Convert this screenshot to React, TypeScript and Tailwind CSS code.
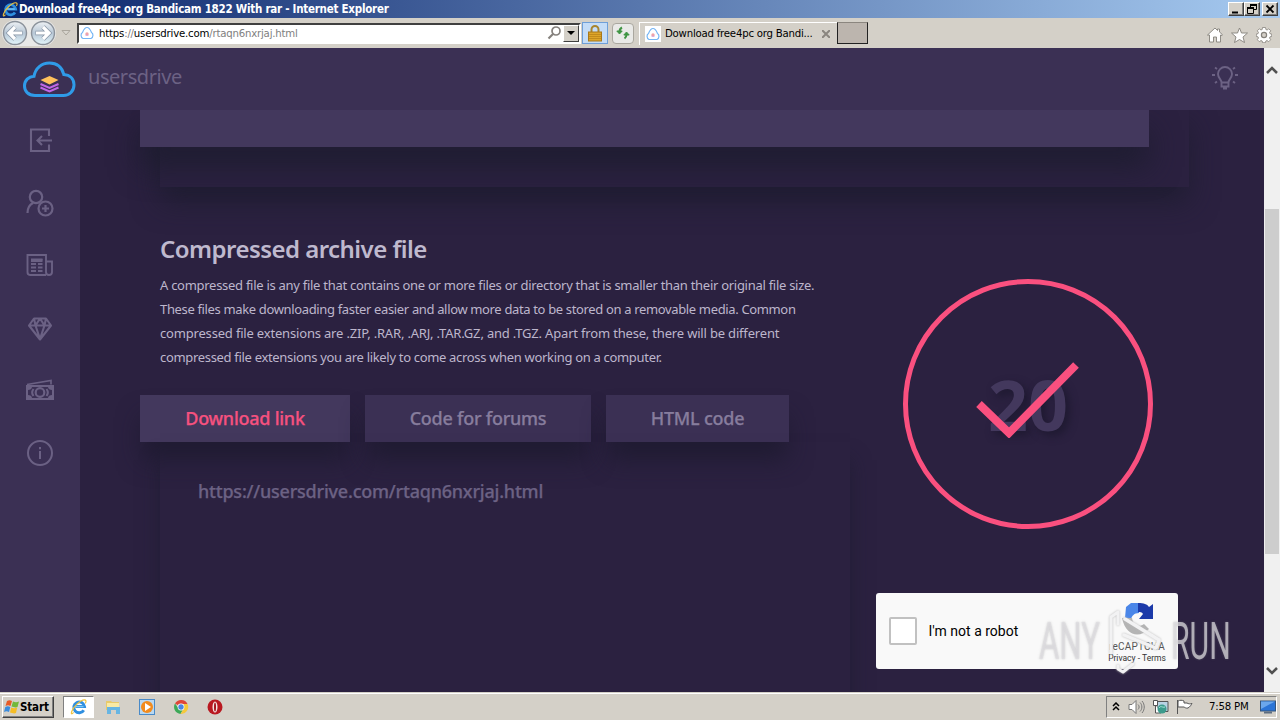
import type { ReactNode } from "react";

const ui = "font-['DejaVu_Sans_Condensed','DejaVu_Sans',sans-serif] [font-stretch:condensed]";

function IeLogo({ className }: { className: string }) {
  return (
    <svg viewBox="0 0 20 20" className={className} fill="none">
      <path d="M15.300 13.500a6 6 0 1 1 .8-4H6.200" stroke="#2f8fe0" strokeWidth="3.200" />
      <path d="M5.500 9.500h9.500" stroke="#7cc8f7" strokeWidth="1.500" />
      <path d="M4 16C-.5 21 1 13 8 6.500 14 1 20 .5 17 6" stroke="#f0c33c" strokeWidth="1.300" />
    </svg>
  );
}

function CloudFavicon() {
  return (
    <svg viewBox="0 0 16 16" className="size-4 shrink-0" fill="none">
      <rect width="16" height="16" fill="#fff" />
      <path d="M4 13.500C1.500 12.500 1.500 8.500 3.500 7.500 4.500 5 6 2.500 8 2.500s3.500 2.500 4.500 5c2 1 2 5-.5 6z" stroke="#74b5f5" strokeWidth="1.200" />
      <circle cx="8" cy="9" r="1.700" fill="#f0a3a8" />
      <path d="M6.500 10.300h3" stroke="#c79be6" strokeWidth=".7" />
    </svg>
  );
}

function NavArrow({ back }: { back?: boolean }) {
  return (
    <svg viewBox="0 0 26 26" className="size-[26px]" fill="none">
      <defs>
        <linearGradient id={back ? "nb" : "nf"} x1="0" y1="0" x2="0" y2="1">
          <stop offset="0" stopColor="#eef1f4" />
          <stop offset=".5" stopColor="#b7c7d6" />
          <stop offset="1" stopColor="#e3f5fb" />
        </linearGradient>
      </defs>
      <circle cx="13" cy="13" r="11.500" fill={back ? "url(#nb)" : "url(#nf)"} stroke="#8b929b" strokeWidth="1.400" />
      <path
        d={back ? "M20.500 13H7.500M13 7 7 13l6 6" : "M5.500 13h13M13 7l6 6-6 6"}
        stroke="#8795a5"
        strokeWidth="4.600"
      />
      <path
        d={back ? "M20 13H8M13 7 7 13l6 6" : "M6 13h12M13 7l6 6-6 6"}
        stroke="#fff"
        strokeWidth="3.200"
      />
    </svg>
  );
}

function WinButton({ children }: { children: ReactNode }) {
  return (
    <div className="flex h-[14px] w-4 items-center justify-center border border-t-white border-l-white border-r-[#404040] border-b-[#404040] bg-[#d4d0c8] shadow-[inset_-1px_-1px_0_#808080]">
      <svg viewBox="0 0 12 12" className="size-3" fill="none" stroke="#000">
        {children}
      </svg>
    </div>
  );
}

function TitleBar() {
  return (
    <div className="flex h-[18px] items-center bg-[linear-gradient(90deg,#0a246a_0%,#a6caf0_100%)] pr-[2px] pl-0.5">
      <IeLogo className="size-[17px]" />
      <span className={`${ui} w-[372px] text-[11.5px] leading-[17px] font-bold tracking-[-0.25px] whitespace-nowrap text-white`}>
        Download free4pc org Bandicam 1822 With rar - Internet Explorer
      </span>
      <div className="ml-auto flex">
        <WinButton><path d="M2 9.500h6" strokeWidth="2" /></WinButton>
        <WinButton>
          <path d="M4.500 4V1.500h6v5H8" />
          <path d="M4 2h7M1 5h7" strokeWidth="2" />
          <path d="M1.500 5v5.500h6V5" />
        </WinButton>
        <div className="ml-0.5">
          <WinButton><path d="m2.500 2.500 7 7M9.500 2.500l-7 7" strokeWidth="1.800" /></WinButton>
        </div>
      </div>
    </div>
  );
}

function Toolbar() {
  return (
    <div className="flex h-[30px] items-center bg-[#d4d0c8]">
      <div className="ml-0.5 flex items-center gap-0.5 rounded-full bg-[#e9e9e8]">
        <NavArrow back />
        <NavArrow />
      </div>
      <svg viewBox="0 0 10 8" className="ml-[5px] h-2 w-2.5" fill="#d8d5ce" stroke="#aaa69d">
        <path d="M1 1.500h8L5 6z" />
      </svg>
      <div className="ml-1.5 flex h-[21px] w-[504px] items-center border-2 border-t-[#404040] border-l-[#404040] border-r-white border-b-white bg-white">
        <CloudFavicon />
        <span className={`${ui} mt-0.5 ml-1 text-[11.3px] tracking-[-0.2px] whitespace-nowrap text-[#808080]`}>
          <span className="text-black">https</span>://
          <span className="text-black">usersdrive.com</span>/rtaqn6nxrjaj.html
        </span>
        <svg viewBox="0 0 16 16" className="ml-auto size-4" fill="none" stroke="#85817d" strokeWidth="1.700">
          <circle cx="10" cy="6" r="4" />
          <path d="M7 9 2.500 13.500" strokeWidth="2.200" />
        </svg>
        <div className="ml-px flex h-[17px] w-4 items-center justify-center border border-t-white border-l-white border-r-[#404040] border-b-[#404040] bg-[#d4d0c8]">
          <svg viewBox="0 0 8 4" className="h-1 w-2"><path d="M0 0h8L4 4z" /></svg>
        </div>
      </div>
      <div className="ml-px flex h-[22px] w-[26px] items-center justify-center border border-[#6f9fd8] bg-[#c4dcf7]">
        <svg viewBox="0 0 14 17" className="h-[17px] w-3.5" fill="none">
          <path d="M3.500 8V4.500a3.500 3.500 0 0 1 7 0V8" stroke="#a8852e" strokeWidth="2" />
          <rect x=".5" y="7" width="13" height="9" fill="#dda529" stroke="#a8781a" />
          <path d="M1 9.500h12M1 11.500h12M1 13.500h12" stroke="#b57f17" strokeWidth=".7" />
        </svg>
      </div>
      <div className="ml-1 flex h-[21px] w-[22px] items-center justify-center rounded-sm border border-[#aaa79f] bg-[#e9e9e7]">
        <svg viewBox="0 0 14 14" className="size-3.5" fill="#3f9443" stroke="#3f9443" strokeWidth="2">
          <path d="M6 1.500C4 2.500 3.500 4 3.500 6M8.500 12.500c1.500-1 2-2.500 2-4" fill="none" />
          <path d="M.8 5h5.400L3.500 8zM7.800 9h5.400L10.500 6z" strokeWidth="1" />
        </svg>
      </div>
      <div className="ml-[5px] flex h-[23px] w-[198px] items-center border-t border-l border-white pl-[5px]">
        <CloudFavicon />
        <span className={`${ui} mt-0.5 ml-1 text-[11.3px] tracking-[-0.22px] whitespace-nowrap text-black`}>Download free4pc org Bandi...</span>
        <svg viewBox="0 0 8 8" className="mr-[7px] ml-auto size-2" stroke="#8b867f" strokeWidth="2"><path d="m0 0 8 8M8 0 0 8" /></svg>
      </div>
      <div className="h-[22px] w-[31px] border border-t-[#8b867f] border-l-[#222] border-r-[#222] border-b-[#222] bg-[#bcb5ae]" />
      <div className="mt-1 mr-2 ml-auto flex items-center gap-2 text-[#85817b]">
        <svg viewBox="0 0 16 16" className="size-4" fill="#fff" stroke="currentColor" strokeWidth=".9">
          <path d="M2.500 8v7h4v-5h3v5h4V8l1.500.5.300-1L12.500 5V2h-2v1.500L8 1 .5 8z" />
        </svg>
        <svg viewBox="0 0 17 16" className="h-4 w-[17px]" fill="#fff" stroke="currentColor" strokeWidth=".9">
          <path d="m8.500 1 2 5h6l-4.500 4 1.500 5.500-5-3-5 3L5 10 .5 6h6z" />
        </svg>
        <svg viewBox="0 0 16 16" className="size-4" fill="#fff" stroke="currentColor" strokeWidth=".8">
          <path d="M6.500.5h3l.4 2 1.200.5 1.700-1.200 2 2L13.500 5.500l.5 1.200 1.700.3v2.500l-1.700.3-.5 1.200 1.200 1.700-2 2-1.700-1.200-1.200.5-.3 1.700h-3l-.3-1.700-1.200-.5-1.700 1.200-2-2 1.200-1.700L2 9.800.3 9.500V7L2 6.700l.5-1.200-1.200-1.700 2-2L5 3l1.200-.5z" />
          <circle cx="8" cy="8" r="2.600" fill="#d4d0c8" strokeWidth="1.200" />
        </svg>
      </div>
    </div>
  );
}

function SiteHeader() {
  return (
    <header className="flex h-[62px] shrink-0 items-center bg-[#3b3054] pr-[26px] pl-[22px]">
      <svg viewBox="0 0 54 38" className="-mt-px h-[38px] w-[54px]" fill="none">
        <path
          d="M13 35.500C6 35.500 2.500 31 2.500 26c0-5.500 4-9.500 9.500-9.800C13.500 8 19.500 3 27.500 3c7.500 0 12.500 4.500 14.300 11.500 6.200.5 10.200 4.500 10.200 10.300 0 6.200-4.500 10.700-10.500 10.700z"
          stroke="#2f9be8"
          strokeWidth="3"
        />
        <path d="m18.500 20 9-4 9 4-9 4.500z" fill="#ffc15c" />
        <path d="m18.500 24 9 4 9-4M18.500 27.500l9 4 9-4" stroke="#c067e6" strokeWidth="2" />
      </svg>
      <span className="-mt-1 ml-3 font-['Noto_Sans',sans-serif] text-xl tracking-[-0.45px] whitespace-nowrap text-[#6c6284]">usersdrive</span>
      <svg viewBox="0 0 26 26" className="-mt-1 ml-auto size-[26px]" fill="none" stroke="#6c6284" strokeWidth="1.900">
        <path d="M9.500 18.500c0-3-3.500-4.500-3.500-8.500a7 7 0 0 1 14 0c0 4-3.500 5.500-3.500 8.500zM9.500 18.500v4h7v-4M11 24.500h4M0 11h3M23 11h3M3 3.500l2 1.500M23 3.500 21 5M3 19l2-1.500M23 19l-2-1.500" />
      </svg>
    </header>
  );
}

function Sidebar() {
  return (
    <nav className="flex w-20 shrink-0 flex-col items-center bg-[#3b3054] pt-4 text-[#6b6184]">
      <svg viewBox="0 0 28 28" className="size-7" fill="none" stroke="currentColor" strokeWidth="2.100">
        <path d="M23 10V3.500H5V25h18v-6.500M26 14.500H12M16 10l-4.500 4.500L16 19" />
      </svg>
      <svg viewBox="0 0 28 28" className="mt-[35px] size-7" fill="none" stroke="currentColor" strokeWidth="2.200">
        <circle cx="10" cy="8" r="6.200" />
        <path d="M1.500 24c0-5.500 2.500-8.500 5.500-10" />
        <circle cx="19.500" cy="19.500" r="7" />
        <path d="M19.500 16v7M16 19.500h7" />
      </svg>
      <svg viewBox="0 0 28 28" className="mt-[34px] size-7" fill="none" stroke="currentColor" strokeWidth="1.900">
        <path d="M20 24H4c-2 0-2.500-1-2.500-3V4H20v17c0 4 6 4 6 0V10.500h-6M5 8.500h11.500M5 13h5M12 13h4.500M5 16.500h5M12 16.500h4.500M5 20h5M12 20h4.500" />
        <path d="M5 9.500h11.500" strokeWidth="3" />
      </svg>
      <svg viewBox="0 0 28 28" className="mt-[36px] size-7" fill="none" stroke="currentColor" strokeWidth="2.100" strokeLinejoin="round">
        <path d="M8 3.500h12l5 7L14 24.500 3 10.500zM3 10.500h22M9.500 10.500 14 24l4.500-13.500M8 3.500l1.500 7 4.500-7 4.500 7 1.500-7" />
      </svg>
      <svg viewBox="0 0 28 22" className="mt-[36px] h-[22px] w-7" fill="none" stroke="currentColor" strokeWidth="1.700">
        <path d="M1 5.500 25 1.500v4" />
        <path fill="currentColor" stroke="none" fillRule="evenodd" d="M0 6h28v15H0zM6 8c0 2-2 3-4 3v5c2 0 4 1 4 3h16c0-2 2-3 4-3v-5c-2 0-4-1-4-3z" />
        <circle cx="14" cy="13.500" r="4.300" strokeWidth="2.200" />
        <path d="M7.500 10c-1.500 2-1.500 5 0 7M20.500 10c1.500 2 1.500 5 0 7" strokeWidth="2" />
      </svg>
      <svg viewBox="0 0 28 28" className="mt-[38px] size-7" fill="none" stroke="currentColor" strokeWidth="2">
        <circle cx="14" cy="14" r="12" />
        <path d="M14 12v8M14 8v2.200" strokeWidth="2" />
      </svg>
    </nav>
  );
}

function Recaptcha() {
  return (
    <div className="relative flex h-[76px] w-[302px] items-center rounded-[3px] bg-[#f9f9f9] pl-[13px]">
      <div className="size-7 rounded-[2px] border-2 border-[#c1c1c1] bg-white" />
      <span className="ml-[11.5px] font-[Roboto,sans-serif] text-sm whitespace-nowrap text-black">I'm not a robot</span>
      <div className="mt-1 mr-[11px] ml-auto flex w-[60px] flex-col items-center font-[Roboto,sans-serif] whitespace-nowrap text-[#555]">
        <svg viewBox="0 0 32 34" className="h-[34px] w-8">
          <path d="M5 5 10 1h8v10c-5 0-7 3-8 6L4 16z" fill="#4a86e8" />
          <path d="M17 1c6 0 9 1 11 4l4-3v15H18l4-5c-1-2-3-2-5-2z" fill="#1c3aa9" />
          <path d="M1 16h10c1 7 7 10 12 6l5 5c-9 9-23 8-27-11z" fill="#b4b4b4" />
        </svg>
        <span className="mt-1 text-[10px] leading-[13px] tracking-[0.2px]">reCAPTCHA</span>
        <span className="text-[8.5px] leading-[11px] text-[#333]">Privacy - Terms</span>
      </div>
      <div className="absolute top-[16px] left-[163px] flex w-[195px] items-center font-[Roboto,sans-serif] text-[52px] leading-[52px] font-normal whitespace-nowrap text-[#dedde1]/70 [text-shadow:0_0_3px_#88888866]">
        <span className="w-[67px]"><span className="inline-block origin-left scale-x-[0.6]">ANY</span></span>
        <svg viewBox="0 0 60 66" className="h-[66px] w-[60px] shrink-0 overflow-visible drop-shadow-[0_0_1px_#bbb]" fill="none" stroke="#f2f2f3" strokeLinecap="round" strokeLinejoin="round">
          <path d="M5 44V8l7-5v12" strokeWidth="3" />
          <path d="m19 10 34 21-3 8-32-13" strokeWidth="3.500" />
          <path d="M12 57v3l5 3 10-8" strokeWidth="3" />
        </svg>
        <span className="ml-[5px] w-[60px]"><span className="inline-block origin-left scale-x-[0.58]">RUN</span></span>
      </div>
    </div>
  );
}

const tabShadow = "shadow-[0_20px_25px_-2px_rgba(28,26,46,0.75)]";

function Main() {
  return (
    <main className="min-w-0 flex-1 overflow-hidden bg-[#2b2140] pl-20 font-['Noto_Sans',sans-serif]">
      <div className="h-[77px] w-[1029px] shadow-[0_15px_28px_rgba(28,28,46,0.75)]">
        <div className="-ml-5 h-[37px] w-[1009px] bg-[#43385d] shadow-[0_20px_30px_rgba(28,28,46,0.85)]" />
      </div>
      <div className="flex">
        <section className="w-[690px] shrink-0 pt-[46px]">
          <h1 className="h-8 text-2xl leading-8 font-semibold tracking-[-0.54px] whitespace-nowrap text-[#bfb9ce]">Compressed archive file</h1>
          <p className="mt-2 text-[13px] leading-6 whitespace-nowrap text-[#bdb6cc]">
            <span className="block tracking-[-0.28px]">A compressed file is any file that contains one or more files or directory that is smaller than their original file size.</span>
            <span className="block tracking-[-0.35px]">These files make downloading faster easier and allow more data to be stored on a removable media. Common</span>
            <span className="block tracking-[-0.18px]">compressed file extensions are .ZIP, .RAR, .ARJ, .TAR.GZ, and .TGZ. Apart from these, there will be different</span>
            <span className="block tracking-[-0.32px]">compressed file extensions you are likely to come across when working on a computer.</span>
          </p>
          <div className="relative mt-[26px] -ml-5 flex gap-[15px] text-lg font-medium whitespace-nowrap text-[#877d9d] [-webkit-text-stroke:0.25px]">
            <div className={`flex h-[47px] w-[210px] items-center justify-center bg-[#43385d] pb-0.5 tracking-[-0.25px] text-[#f6517f] ${tabShadow}`}>Download link</div>
            <div className={`flex h-[47px] w-[226px] items-center justify-center bg-[#3b3054] pb-0.5 tracking-[-0.25px] ${tabShadow}`}>Code for forums</div>
            <div className={`flex h-[47px] w-[183px] items-center justify-center bg-[#3b3054] pb-0.5 tracking-[-0.25px] ${tabShadow}`}>HTML code</div>
          </div>
          <div className="relative h-[280px] pt-[35px] pl-[38px] text-lg font-medium tracking-[-0.22px] whitespace-nowrap text-[#6c6284] shadow-[0_18px_18px_rgba(28,28,46,0.65)] [-webkit-text-stroke:0.25px]">
            https://usersdrive.com/rtaqn6nxrjaj.html
          </div>
        </section>
        <section className="ml-[26px] flex w-[302px] flex-col items-center pt-[92px]">
          <div className="relative left-px flex size-[250px] items-center justify-center rounded-full border-[5px] border-[#fa507f]">
            <span className="font-['Open_Sans',sans-serif] text-[70px] leading-none font-bold text-[#43385d] [text-shadow:4px_4px_8px_#1e1930]">20</span>
            <svg viewBox="0 0 104 76" className="absolute top-[78px] left-[68px] h-[76px] w-[104px]" fill="none" stroke="#fa507f" strokeWidth="8">
              <path d="m3 42 30 29L100 3" />
            </svg>
          </div>
          <div className="mt-16"><Recaptcha /></div>
        </section>
      </div>
    </main>
  );
}

function Scrollbar() {
  return (
    <div className="flex w-4 shrink-0 flex-col items-center bg-[#f0f0f0] text-[#505050]">
      <svg viewBox="0 0 12 8" className="mt-[18px] h-2 w-3" fill="none" stroke="currentColor" strokeWidth="2.500"><path d="m1 7 5-5 5 5" /></svg>
      <div className="mt-[135px] h-[345px] w-3.5 bg-[#cdcdcd]" />
      <svg viewBox="0 0 12 8" className="mt-auto mb-[17px] h-2 w-3" fill="none" stroke="currentColor" strokeWidth="2.500"><path d="m1 1 5 5 5-5" /></svg>
    </div>
  );
}

function Taskbar() {
  return (
    <footer className="flex h-7 items-center border-t border-[#d4d0c8] bg-[#d4d0c8] shadow-[inset_0_1px_0_#fff]">
      <div className="ml-0.5 flex h-[22px] w-[52px] items-center border border-t-white border-l-white border-r-[#404040] border-b-[#404040] pl-px shadow-[inset_-1px_-1px_0_#808080]">
        <svg viewBox="0 0 16 16" className="size-4 shrink-0">
          <path d="M3 2c2-1 3-1 5 0L6.500 7c-2-1-3-1-5 0z" fill="#e85b27" />
          <path d="M9 2.500c2 1 4 1 6 0L13.500 8c-2 1-4 0-6-.5z" fill="#73b83b" />
          <path d="M1.300 8c2-1 3-1 5 0L5 13c-2-1-3-1-5 0z" fill="#3b8cdd" />
          <path d="M7.200 8.500c2 1 4 1 6 0L12 14c-2 1-4 0-6-.5z" fill="#f5bd26" />
        </svg>
        <span className={`${ui} mt-0.5 text-[11.5px] font-bold tracking-[-0.15px] text-black`}>Start</span>
      </div>
      <div className="ml-[9px] flex h-[22px] w-[31px] items-center justify-center border border-t-[#808080] border-l-[#808080] border-r-white border-b-white bg-white">
        <IeLogo className="size-[18px]" />
      </div>
      <svg viewBox="0 0 16 16" className="ml-[11px] size-4">
        <path d="M1 2h5l1 1h7v8H1z" fill="#e8ca6b" />
        <path d="M2 4h12v4H2z" fill="#f9eaa5" />
        <path d="M2 8h13v7h-4v-4H6v4H2z" fill="#67b5e3" />
      </svg>
      <svg viewBox="0 0 16 16" className="ml-[18px] size-4">
        <rect x=".5" y=".5" width="15" height="15" fill="#b9d8f1" stroke="#498ac8" />
        <circle cx="8" cy="8" r="6" fill="#f28b1d" />
        <path d="m6 4 6 4-6 4z" fill="#fff" />
      </svg>
      <svg viewBox="0 0 16 16" className="ml-[18px] size-4">
        <path d="M8 8 2 4.500A7 7 0 0 1 14.500 5H8z" fill="#df4639" />
        <path d="M8 8H4.500L2 4.500A7 7 0 0 0 7.500 15l3-5.500z" fill="#3da858" />
        <path d="M8 8V5h6.500A7 7 0 0 1 7.500 15l3-5z" fill="#f5c93c" />
        <circle cx="8" cy="8" r="3.400" fill="#fff" />
        <circle cx="8" cy="8" r="2.700" fill="#4a86e4" />
      </svg>
      <svg viewBox="0 0 16 16" className="ml-[18px] size-4">
        <circle cx="8" cy="8" r="7.500" fill="#b91820" />
        <ellipse cx="8" cy="8" rx="2.500" ry="5.500" fill="#f5e4e2" />
        <ellipse cx="8" cy="8" rx="1" ry="4.500" fill="#a3141c" />
      </svg>
      <div className="mr-[3px] ml-auto flex h-[22px] w-[171px] items-center border border-t-[#808080] border-l-[#808080] border-r-white border-b-white pl-[5px]">
        <svg viewBox="0 0 8 10" className="h-2.5 w-2" fill="none" stroke="#000" strokeWidth="1.500"><path d="m1 4 3-3 3 3M1 8l3-3 3 3" /></svg>
        <svg viewBox="0 0 17 16" className="ml-2 h-4 w-[17px]" fill="#fff" stroke="#777">
          <path d="M1 5.500h3L8 1.500v13l-4-4H1z" />
          <path d="M10 5.500c1.500 1.500 1.500 3.500 0 5M12 3.500c2.500 2.500 2.500 6.500 0 9M14 2c3 3.500 3 8.500 0 12" fill="none" />
        </svg>
        <svg viewBox="0 0 17 16" className="ml-[7px] h-4 w-[17px]">
          <path d="M5 2.500h11v10H5z" fill="#b9d3e4" stroke="#555" />
          <path d="M1.500 1.500h4v5h-4zM3.500 6v8H9" fill="#fff" stroke="#555" />
          <circle cx="10" cy="10" r="4.500" fill="#3c9b8c" />
          <path d="M7 9c2-3 3 0 6-1" stroke="#a8e4d8" fill="none" />
        </svg>
        <svg viewBox="0 0 17 16" className="ml-[7px] h-4 w-[17px]" fill="#fff" stroke="#555">
          <path d="M1.500 1v14M2 2c2-1 4-1 6 0v2h3c1.500 1 3 1 5 .5-1 1.500-1.500 3-4 4.500-2 .5-3-.5-4-1H2z" />
        </svg>
        <span className={`${ui} mt-0.5 ml-4 text-[11.3px] tracking-[-0.2px] whitespace-nowrap text-black`}>7:58 PM</span>
        <svg viewBox="0 0 16 14" className="mr-0 ml-auto h-3.5 w-4">
          <rect x=".5" y="1" width="15" height="10" fill="#2b74d6" stroke="#35557b" />
          <path d="M1 1.500h14L1 9z" fill="#6ba7ec" />
          <path d="M4 12.500h8" stroke="#5d6d80" strokeWidth="2" />
        </svg>
      </div>
    </footer>
  );
}

export default function App() {
  return (
    <div className="flex h-[720px] w-[1280px] flex-col overflow-hidden">
      <TitleBar />
      <Toolbar />
      <div className="flex h-[644px]">
        <div className="flex min-w-0 flex-1 flex-col">
          <SiteHeader />
          <div className="flex min-h-0 flex-1">
            <Sidebar />
            <Main />
          </div>
        </div>
        <Scrollbar />
      </div>
      <Taskbar />
    </div>
  );
}
